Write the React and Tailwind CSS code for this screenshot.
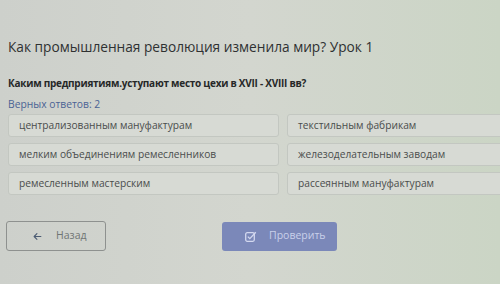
import React from "react"
import { FaArrowLeft } from "react-icons/fa6"

const answers = [
    ["централизованным мануфактурам", "текстильным фабрикам"],
    ["мелким объединениям ремесленников", "железоделательным заводам"],
    ["ремесленным мастерским", "рассеянным мануфактурам"],
]

const Option = ({ text }) => (
    <div className="h-[23px] flex items-center px-[10px] rounded-[3px] border border-[#c3c7c1] bg-[#d7dad4] text-[10.2px] text-[#4a4d4c]">
        {text}
    </div>
)

const App = () => {
    return (
        <div className="w-[500px] h-[284px] overflow-hidden bg-gradient-to-r from-[#cdd0cb] via-[#d3d6cf] to-[#cbd5c5] font-['Open_Sans',sans-serif]">
            {/* Header */}
            <div className="pt-[38px] pl-[8px]">
                <p className="text-[13.7px] leading-[18px] text-[#2f3132]">Как промышленная революция изменила мир? Урок 1</p>
            </div>

            {/* Question */}
            <div className="pt-[20px] pl-[8px]">
                <p className="text-[10px] leading-[14px] tracking-[-0.25px] font-bold text-[#262828]">Каким предприятиям.уступают место цехи в XVII - XVIII вв?</p>
                <p className="mt-[8px] text-[10.3px] leading-[12px] text-[#4b6394]">Верных ответов: 2</p>
            </div>

            {/* Answers */}
            <div className="pl-[8px] pt-[4px] grid grid-cols-[271px_1fr] gap-x-[8px] gap-y-[6px] -mr-[20px]">
                {answers.map((row, index) => (
                    <React.Fragment key={index}>
                        <Option text={row[0]} />
                        <Option text={row[1]} />
                    </React.Fragment>
                ))}
            </div>

            {/* Buttons */}
            <div className="pl-[6px] pt-[26px] flex items-center">
                <button type="button" className="w-[100px] h-[30px] rounded-[3px] border border-[#8e918f] flex items-center pl-[26px] gap-[14px] text-[10.5px] text-[#6f7574]">
                    <FaArrowLeft className="text-[9px] text-[#4c5c73]" />
                    <span>Назад</span>
                </button>
                <button type="button" className="ml-[116px] w-[115px] h-[29px] rounded-[3px] bg-[#7b88b9] flex items-center pl-[23px] gap-[12px] text-[10.5px] text-[#c9d0ea]">
                    <svg width="12" height="11" viewBox="0 0 12 11" fill="none" stroke="#d3d8ef" strokeWidth="1.3">
                        <rect x="0.7" y="1.7" width="8.6" height="8.6" rx="1.5" />
                        <path d="M2.8 5.6 L4.8 7.6 L10.8 1.2" />
                    </svg>
                    <span>Проверить</span>
                </button>
            </div>
        </div>
    )
}

export default App
